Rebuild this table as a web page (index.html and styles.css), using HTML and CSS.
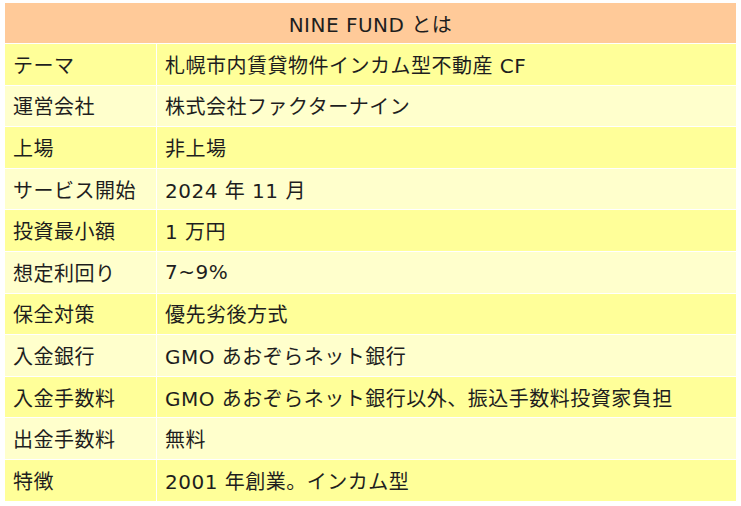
FILE: index.html
```html
<!DOCTYPE html>
<html lang="ja">
<head>
<meta charset="utf-8">
<title>NINE FUND とは</title>
<link rel="stylesheet" href="styles.css">
</head>
<body>
<div class="fund-table">
  <div class="cell head">NINE FUND とは</div>
  <div class="cell key odd">テーマ</div><div class="cell val odd">札幌市内賃貸物件インカム型不動産 CF</div>
  <div class="cell key even">運営会社</div><div class="cell val even">株式会社ファクターナイン</div>
  <div class="cell key odd">上場</div><div class="cell val odd">非上場</div>
  <div class="cell key even">サービス開始</div><div class="cell val even">2024 年 11 月</div>
  <div class="cell key odd">投資最小額</div><div class="cell val odd">1 万円</div>
  <div class="cell key even">想定利回り</div><div class="cell val even">7~9%</div>
  <div class="cell key odd">保全対策</div><div class="cell val odd">優先劣後方式</div>
  <div class="cell key even">入金銀行</div><div class="cell val even">GMO あおぞらネット銀行</div>
  <div class="cell key odd">入金手数料</div><div class="cell val odd">GMO あおぞらネット銀行以外、振込手数料投資家負担</div>
  <div class="cell key even">出金手数料</div><div class="cell val even">無料</div>
  <div class="cell key odd">特徴</div><div class="cell val odd">2001 年創業。インカム型</div>
</div>
</body>
</html>
```
FILE: styles.css
```css
html, body {
  margin: 0;
  padding: 0;
  background: #ffffff;
}
body {
  padding: 3px 5px 0 5px;
  font-family: "DejaVu Sans", "Noto Sans CJK JP", sans-serif;
  font-size: 20px;
  letter-spacing: 0.5px;
  color: #1e1e1e;
}
.fund-table {
  display: grid;
  grid-template-columns: 151px 1fr;
  grid-template-rows: 40px repeat(11, 40.6px);
  gap: 1px;
  background: #ffffff;
  width: 731px;
}
.cell {
  display: flex;
  align-items: center;
  padding: 0 8px;
  white-space: nowrap;
}
.head {
  grid-column: 1 / span 2;
  justify-content: center;
  background: #ffca99;
}
.odd { background: #ffff99; }
.even { background: #ffffcc; }
```
